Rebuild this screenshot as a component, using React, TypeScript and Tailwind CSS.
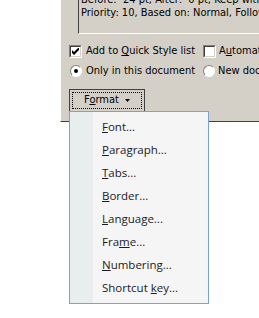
import React from "react";

const menuItems: [string, string, string][] = [
  ["", "F", "ont..."],
  ["", "P", "aragraph..."],
  ["", "T", "abs..."],
  ["", "B", "order..."],
  ["", "L", "anguage..."],
  ["Fra", "m", "e..."],
  ["", "N", "umbering..."],
  ["Shortcut ", "k", "ey..."],
];

function CheckBox({ checked }: { checked?: boolean }) {
  return (
    <span className="shrink-0 w-[13px] h-[13px] border border-t-[#808080] border-l-[#808080] border-b-white border-r-white flex">
      <span className="flex-1 bg-white border border-t-[#404040] border-l-[#404040] border-b-[#d4d0c8] border-r-[#d4d0c8] flex items-center justify-center">
        {checked && (
          <svg width="7" height="7" viewBox="0 0 7 7">
            <path d="M0 2v3l2 2 5-5V-1L2 4z" fill="#000" />
          </svg>
        )}
      </span>
    </span>
  );
}

function Radio({ checked }: { checked?: boolean }) {
  return (
    <span className="shrink-0 w-[12px] h-[12px] rounded-full bg-white border border-t-[#808080] border-l-[#808080] border-b-white border-r-white flex items-center justify-center">
      {checked && <span className="w-[4px] h-[4px] rounded-full bg-black" />}
    </span>
  );
}

export default function App() {
  return (
    <div
      className="relative w-[259px] h-[318px] bg-white overflow-hidden text-[11px] text-black"
      style={{ fontFamily: '"DejaVu Sans Condensed", "Liberation Sans", sans-serif' }}
    >
      {/* Dialog panel */}
      <div className="ml-[60px] h-[122px] bg-[#d4d0c8] border-l border-white border-b border-b-[#404040] flex flex-col overflow-hidden">
        {/* Preview text box */}
        <div className="ml-[17px] h-[34px] border-l border-[#404040] border-b border-b-white overflow-hidden pl-[2px] shrink-0">
          <div className="-mt-[7px] leading-[13px] whitespace-nowrap">
            <div>Before:&nbsp; 24 pt, After:&nbsp; 0 pt, Keep with</div>
            <div>Priority: 10, Based on: Normal, Follow</div>
          </div>
        </div>

        {/* Options */}
        <div className="mt-[11px] ml-[8px] flex items-center h-[13px] whitespace-nowrap shrink-0">
          <CheckBox checked />
          <span className="ml-[4px] w-[117px] shrink-0">
            Add to <span className="underline">Q</span>uick Style list
          </span>
          <CheckBox />
          <span className="ml-[3px]">
            A<span className="underline">u</span>tomat
          </span>
        </div>
        <div className="mt-[7px] ml-[9px] flex items-center h-[12px] whitespace-nowrap shrink-0">
          <Radio checked />
          <span className="ml-[4px] w-[117px] shrink-0">Only in this document</span>
          <Radio />
          <span className="ml-[3px]">New doc</span>
        </div>

        {/* Format button */}
        <div className="mt-[12px] ml-[8px] w-[76px] h-[23px] border border-[#404040] bg-[#d4d0c8] p-[2px] shrink-0">
          <div className="h-full border border-dotted border-black flex items-center justify-center gap-[6px]">
            <span>
              F<span className="underline">o</span>rmat
            </span>
            <svg width="5" height="3" viewBox="0 0 5 3">
              <path d="M0 0h5L2.5 3z" fill="#000" />
            </svg>
          </div>
        </div>
      </div>

      {/* Dropdown menu */}
      <div
        className="absolute left-[69px] top-[111px] w-[140px] h-[193px] border border-[#7ba2d6] bg-[#f5f5f5] flex text-[11.5px] text-[#1c1a28]"
        style={{ fontFamily: '"Open Sans", "Noto Sans", sans-serif' }}
      >
        <div className="w-[23px] bg-[#e8eded]" />
        <div className="flex-1 pt-[3px] pl-[9px] flex flex-col">
          {menuItems.map(([a, k, b]) => (
            <div key={a + k + b} className="h-[23px] flex items-center whitespace-nowrap">
              <span>
                {a}
                <span className="underline">{k}</span>
                {b}
              </span>
            </div>
          ))}
        </div>
      </div>
    </div>
  );
}
